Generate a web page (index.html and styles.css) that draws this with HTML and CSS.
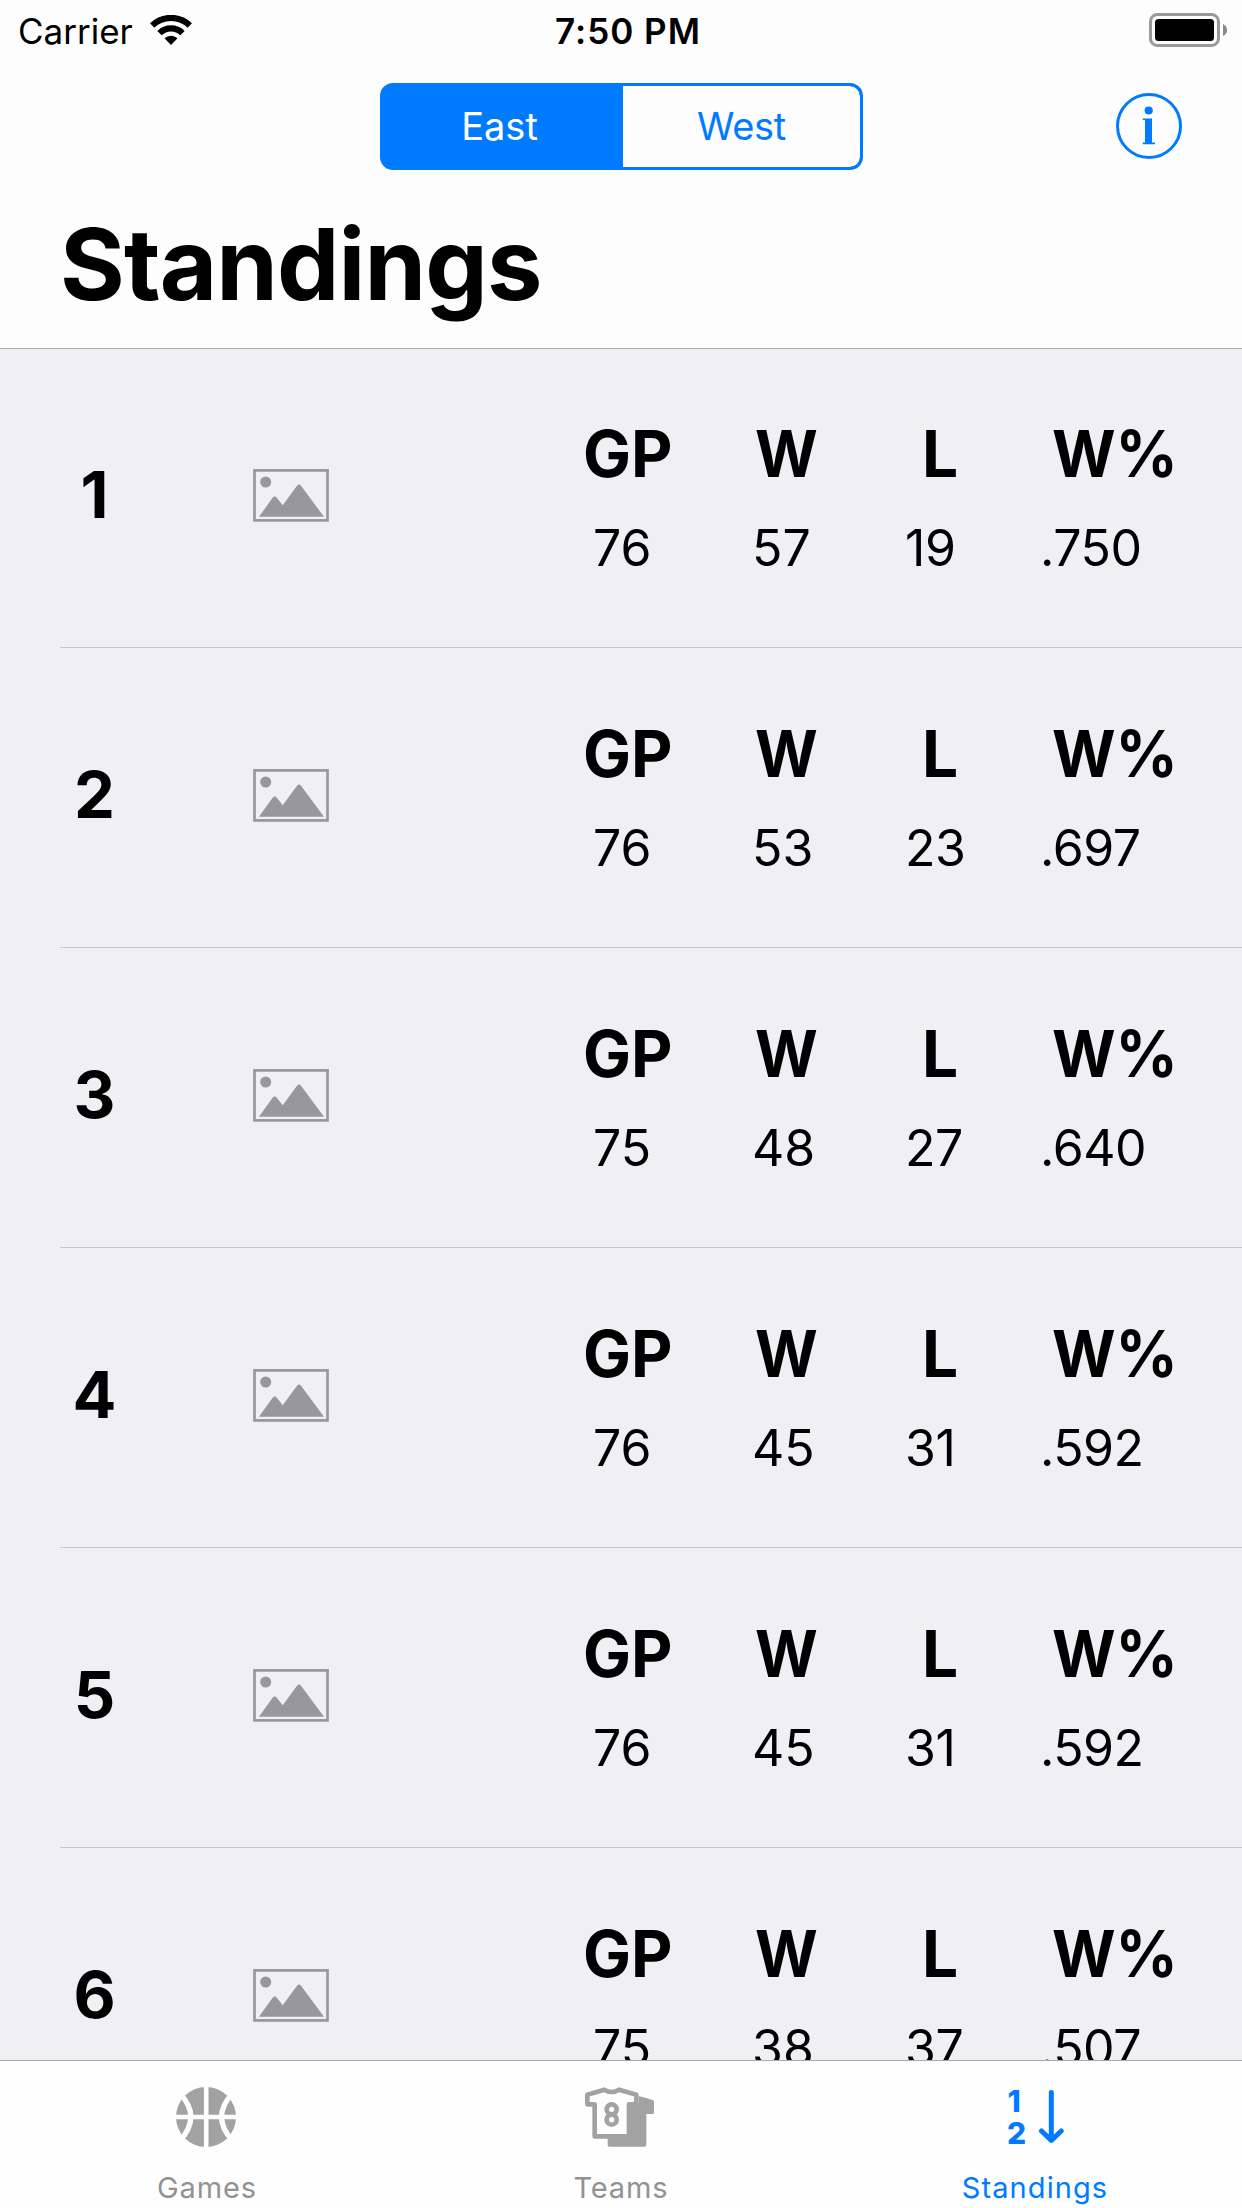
FILE: index.html
```html
<!DOCTYPE html>
<html lang="en">
<head>
<meta charset="utf-8">
<title>Standings</title>
<link rel="stylesheet" href="styles.css">
</head>
<body>
<svg class="defs" aria-hidden="true">
  <symbol id="photo" viewBox="0 0 76 53">
    <rect x="1.5" y="1.4" width="73" height="50" fill="none" stroke="#98989b" stroke-width="2.7"/>
    <circle cx="12.7" cy="13" r="5.5" fill="#98989b"/>
    <path d="M6 47.8 L19.6 28.8 Q21.7 26 23.8 28.8 L29.7 36.3 L44 16.8 Q46 14.4 48 16.8 L71 47.8Z" fill="#98989b"/>
  </symbol>
</svg>
<div class="screen">
  <header class="header">
    <div class="status">
      <div class="carrier">
        <span>Carrier</span>
        <svg class="wifi" width="42" height="31" viewBox="0 0 42 31">
          <path d="M2.2 10.5A27.1 27.1 0 0 1 39.8 10.5M9.5 18.1A16.5 16.5 0 0 1 32.5 18.1" fill="none" stroke="#000" stroke-width="6.2"/>
          <path d="M21 30L14.5 23.3A9.3 9.3 0 0 1 27.5 23.3Z"/>
        </svg>
      </div>
      <div class="time">7:50 PM</div>
      <div class="power">
        <svg class="battery" width="79" height="34" viewBox="0 0 79 34">
          <rect x="1.5" y="1.5" width="68" height="31" rx="7" fill="none" stroke="#999" stroke-width="3"/>
          <rect x="6" y="6" width="59" height="22" rx="3.5"/>
          <path d="M74 11Q78 13 78 17T74 23Z" fill="#8a8a8a"/>
        </svg>
      </div>
    </div>
    <nav class="nav">
      <div class="segments">
        <div class="segment selected">East</div>
        <div class="segment west">West</div>
      </div>
      <svg class="info" width="66" height="66" viewBox="0 0 66 66" fill="#007aff">
        <circle cx="33" cy="33" r="31.5" fill="none" stroke="#007aff" stroke-width="3"/>
        <circle cx="32.7" cy="17.5" r="4.1"/>
        <path d="M26.8 25.4H36V49.6H39V51.3H26.8V49.6H29V27.1H26.8Z"/>
      </svg>
    </nav>
    <h1 class="title">Standings</h1>
  </header>

  <main class="list">
    <div class="row">
      <div class="rank">1</div><svg class="photo"><use href="#photo"/></svg>
      <div class="stat gp"><b>GP</b><span>76</span></div><div class="stat w"><b>W</b><span>57</span></div>
      <div class="stat l"><b>L</b><span>19</span></div><div class="stat pct"><b>W%</b><span>.750</span></div>
    </div>
    <div class="row">
      <div class="rank">2</div><svg class="photo"><use href="#photo"/></svg>
      <div class="stat gp"><b>GP</b><span>76</span></div><div class="stat w"><b>W</b><span>53</span></div>
      <div class="stat l"><b>L</b><span>23</span></div><div class="stat pct"><b>W%</b><span>.697</span></div>
    </div>
    <div class="row">
      <div class="rank">3</div><svg class="photo"><use href="#photo"/></svg>
      <div class="stat gp"><b>GP</b><span>75</span></div><div class="stat w"><b>W</b><span>48</span></div>
      <div class="stat l"><b>L</b><span>27</span></div><div class="stat pct"><b>W%</b><span>.640</span></div>
    </div>
    <div class="row">
      <div class="rank">4</div><svg class="photo"><use href="#photo"/></svg>
      <div class="stat gp"><b>GP</b><span>76</span></div><div class="stat w"><b>W</b><span>45</span></div>
      <div class="stat l"><b>L</b><span>31</span></div><div class="stat pct"><b>W%</b><span>.592</span></div>
    </div>
    <div class="row">
      <div class="rank">5</div><svg class="photo"><use href="#photo"/></svg>
      <div class="stat gp"><b>GP</b><span>76</span></div><div class="stat w"><b>W</b><span>45</span></div>
      <div class="stat l"><b>L</b><span>31</span></div><div class="stat pct"><b>W%</b><span>.592</span></div>
    </div>
    <div class="row">
      <div class="rank">6</div><svg class="photo"><use href="#photo"/></svg>
      <div class="stat gp"><b>GP</b><span>75</span></div><div class="stat w"><b>W</b><span>38</span></div>
      <div class="stat l"><b>L</b><span>37</span></div><div class="stat pct"><b>W%</b><span>.507</span></div>
    </div>
  </main>

  <footer class="tabs">
    <div class="tab games">
      <svg width="62" height="60" viewBox="-30 -30 62 60">
        <circle r="30" fill="#a2a2a2"/>
        <g fill="none" stroke="#fefefe" stroke-width="4.6">
          <path d="M.2 -31V31M-31 0H31"/>
          <path d="M-26 -23.5Q-4.3 0 -26 23.5M26.4 -23.5Q4.7 0 26.4 23.5" stroke-width="5.2"/>
        </g>
      </svg>
      <span>Games</span>
    </div>
    <div class="tab teams">
      <svg width="72" height="60" viewBox="137 141 216 180">
        <path d="M298 168L340 180Q344 181 344 186V218Q344 222 340 222H321V314Q321 320 315 320H210Q205 320 205 315V290H262V190H298Z" fill="#a2a2a2"/>
        <path d="M144 164L195 149Q217 163 239 149L291 164V193H269V289H166V193H144Z" fill="#fefefe" stroke="#a2a2a2" stroke-width="14" stroke-linejoin="round"/>
        <g fill="none" stroke="#a2a2a2" stroke-width="14"><circle cx="217" cy="208" r="15"/><circle cx="217" cy="239" r="15"/></g>
      </svg>
      <span>Teams</span>
    </div>
    <div class="tab standings">
      <svg width="58" height="60" viewBox="-1 -2 58 60">
        <text class="digit" x="0.5" y="22.6">1</text>
        <text class="digit" x="0" y="55">2</text>
        <path d="M44.3 3.4V50M34.5 42L44.3 51.4L54.2 42" fill="none" stroke="#007aff" stroke-width="5" stroke-linecap="round" stroke-linejoin="round"/>
      </svg>
      <span>Standings</span>
    </div>
  </footer>
</div>
</body>
</html>
```
FILE: styles.css
```css
* { box-sizing: border-box; }

body {
  margin: 0;
  font-family: "Inter", "Liberation Sans", sans-serif;
  color: #000;
  background: #efeff4;
}

.defs { display: none; }

.screen {
  display: flex;
  flex-direction: column;
  width: 1242px;
  height: 2208px;
  overflow: hidden;
}

.header {
  flex: none;
  height: 349px;
  background: #fdfdfd;
  border-bottom: 1px solid #a9a9ab;
}

.status {
  display: grid;
  grid-template-columns: 537px auto 1fr;
  height: 62px;
  padding: 0 14px 0 18px;
  font-size: 35px;
  line-height: 62px;
}

.carrier { display: flex; }
.carrier span { width: 132px; }
.wifi { margin-top: 15px; }
.time { font-weight: 600; letter-spacing: 1px; }
.power { display: flex; justify-content: flex-end; }
.battery { margin-top: 13px; }

.nav {
  display: grid;
  grid-template-columns: 1fr 483px 1fr;
  align-items: center;
  height: 129px;
  padding-left: 1px;
}

.segments {
  grid-column: 2;
  display: flex;
  height: 87px;
  border: 3px solid #007aff;
  border-radius: 13px;
  background: #007aff;
  overflow: hidden;
}

.segment {
  flex: 1;
  font-size: 38px;
  line-height: 81px;
  text-align: center;
  color: #007aff;
  background: #fdfdfd;
  border-radius: 0 10px 10px 0;
}

.selected {
  flex: 0 0 240px;
  padding-right: 7px;
  color: #fff;
  background: #007aff;
}

.west { letter-spacing: -0.3px; }

.info {
  justify-self: end;
  margin: 0 60px 1px 0;
}

.title {
  margin: 13px 0 0 60px;
  font-size: 99px;
  font-weight: 700;
  line-height: 120px;
  letter-spacing: -0.9px;
}

.list {
  flex: 1;
  min-height: 0;
  overflow: hidden;
}

.row {
  display: grid;
  grid-template-columns: 69px 454px 169px 153px 135px 202px;
  align-items: center;
  height: 300px;
  margin-left: 60px;
  padding-bottom: 5px;
  border-bottom: 1px solid #c8c7cc;
}

.row:first-child {
  height: 299px;
  padding-bottom: 6px;
}

.rank {
  font-size: 65px;
  font-weight: 700;
  line-height: 80px;
  text-align: center;
}

.photo {
  width: 76px;
  height: 53px;
  margin-left: 124px;
}

.stat {
  display: flex;
  flex-direction: column;
  align-items: flex-start;
  gap: 24px;
  padding-top: 2px;
}

.stat b {
  font-size: 64px;
  line-height: 80px;
  transform-origin: left;
}

.stat span {
  font-size: 50px;
  line-height: 60px;
}

.gp span { padding-left: 10px; }
.w b { margin-left: 3px; transform: scaleX(0.945); }
.l b { margin-left: 17px; }
.l span { letter-spacing: -0.4px; }
.pct b { margin-left: 12px; transform: scaleX(0.958); }
.pct span { letter-spacing: -0.5px; }

.tabs {
  display: grid;
  grid-template-columns: repeat(3, 1fr);
  flex: none;
  height: 148px;
  background: #fefefe;
  border-top: 1px solid #a9a9ab;
}

.tab {
  display: flex;
  flex-direction: column;
  align-items: center;
  gap: 23px;
  padding-top: 26px;
  font-size: 29px;
  line-height: 36px;
  letter-spacing: 0.9px;
  color: #929292;
}

.standings {
  letter-spacing: 1.1px;
  color: #007aff;
}

.digit {
  font-size: 30px;
  font-weight: 800;
  letter-spacing: 0;
  fill: #007aff;
}
```
